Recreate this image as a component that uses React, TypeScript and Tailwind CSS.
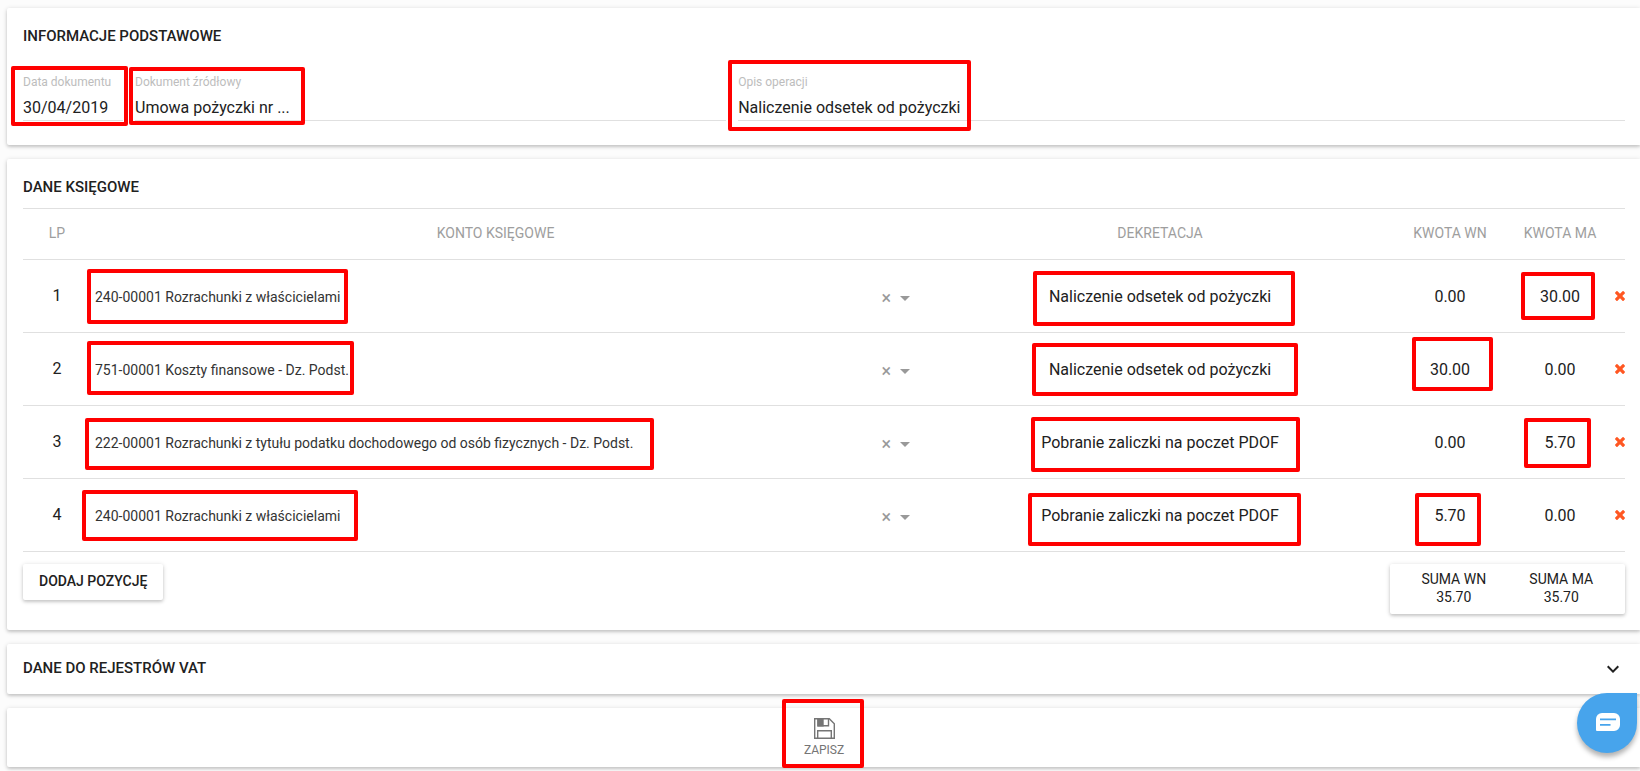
import { useState } from 'react';
import type { ReactNode } from 'react';

const shadow = 'shadow-[0_1px_5px_rgba(0,0,0,0.16),0_2px_3px_rgba(0,0,0,0.12)]';

const accounts = [
  '240-00001 Rozrachunki z właścicielami',
  '751-00001 Koszty finansowe - Dz. Podst.',
  '222-00001 Rozrachunki z tytułu podatku dochodowego od osób fizycznych - Dz. Podst.',
];

const entries = [
  {
    account: accounts[0],
    description: 'Naliczenie odsetek od pożyczki',
    debit: '0.00',
    credit: '30.00',
    accountMark: 'left-6 top-[9px] w-[261px] h-[55px]',
    descriptionMark: 'left-1/2 -ml-[129px] top-[11px] w-[262px] h-[55px]',
    debitMark: '',
    creditMark: 'left-1/2 -ml-[39px] top-3 w-[74px] h-12',
  },
  {
    account: accounts[1],
    description: 'Naliczenie odsetek od pożyczki',
    debit: '30.00',
    credit: '0.00',
    accountMark: 'left-6 top-2 w-[267px] h-[54px]',
    descriptionMark: 'left-1/2 -ml-[130px] top-[10px] w-[266px] h-[53px]',
    debitMark: 'left-1/2 -ml-[38px] top-1 w-[81px] h-[54px]',
    creditMark: '',
  },
  {
    account: accounts[2],
    description: 'Pobranie zaliczki na poczet PDOF',
    debit: '0.00',
    credit: '5.70',
    accountMark: 'left-[22px] top-3 w-[569px] h-[52px]',
    descriptionMark: 'left-1/2 -ml-[131px] top-[11px] w-[269px] h-[55px]',
    debitMark: '',
    creditMark: 'left-1/2 -ml-[36px] top-3 w-[67px] h-[50px]',
  },
  {
    account: accounts[0],
    description: 'Pobranie zaliczki na poczet PDOF',
    debit: '5.70',
    credit: '0.00',
    accountMark: 'left-[19px] top-[11px] w-[276px] h-[51px]',
    descriptionMark: 'left-1/2 -ml-[134px] top-[14px] w-[273px] h-[53px]',
    debitMark: 'left-1/2 -ml-[35px] top-[14px] w-[66px] h-[53px]',
    creditMark: '',
  },
];

// Red highlight frame laid over a field
function Mark({ className }: { className: string }) {
  return (
    <span
      aria-hidden="true"
      className={`absolute z-10 rounded-xs border-4 border-[#ff0000] pointer-events-none ${className}`}
    />
  );
}

function Card({ children, className = '' }: { children: ReactNode; className?: string }) {
  return (
    <section className={`bg-white rounded-l-xs pl-4 pr-[15px] ${shadow} ${className}`}>
      {children}
    </section>
  );
}

function Field({ id, label, value, mark }: { id: string; label: string; value: string; mark: string }) {
  return (
    <div className="relative border-b border-[#e0e0e0]">
      <label htmlFor={id} className="block pt-[2px] text-xs leading-4 text-[#bdbdbd]">
        {label}
      </label>
      <input
        id={id}
        type="text"
        defaultValue={value}
        className="block w-full mt-1 h-[26px] text-base text-[#212121] outline-none"
      />
      <Mark className={mark} />
    </div>
  );
}

export default function App() {
  const [rows] = useState(entries);

  return (
    <main className="min-h-screen bg-[#fcfcfc] pl-[7px] pt-2 pb-1 flex flex-col gap-[14px] overflow-hidden font-['Roboto',sans-serif] text-[#212121]">
      <Card className="pt-[18px] pb-6">
        <h2 className="text-[15px] leading-5 font-medium">INFORMACJE PODSTAWOWE</h2>
        <div className="grid grid-cols-[100px_2fr_3fr] gap-3 mt-[26px]">
          <Field
            id="date"
            label="Data dokumentu"
            value="30/04/2019"
            mark="-left-3 -top-[6px] w-[117px] h-[60px]"
          />
          <Field
            id="source"
            label="Dokument źródłowy"
            value="Umowa pożyczki nr ..."
            mark="-left-[6px] -top-[5px] w-44 h-[58px]"
          />
          <Field
            id="operation"
            label="Opis operacji"
            value="Naliczenie odsetek od pożyczki"
            mark="-left-[10px] -top-3 w-[243px] h-[71px]"
          />
        </div>
      </Card>

      <Card className="pt-[18px] pb-4">
        <h2 className="text-[15px] leading-5 font-medium">DANE KSIĘGOWE</h2>
        <table className="w-full table-fixed mt-[11px] border-t border-[#e0e0e0] border-separate border-spacing-0">
          <thead>
            <tr className="h-[51px] text-sm text-[#9e9e9e] [&>th]:border-b [&>th]:border-[#e0e0e0] [&>th]:font-normal [&>th]:px-0 [&>th]:pt-0 [&>th]:pb-[2px]">
              <th className="w-10">
                <span className="block pl-6 -mr-1">LP</span>
              </th>
              <th className="w-[54%]">KONTO KSIĘGOWE</th>
              <th>
                <span className="block pr-[3px]">DEKRETACJA</span>
              </th>
              <th className="w-[110px]">KWOTA WN</th>
              <th className="w-[110px]">KWOTA MA</th>
              <th className="w-[10px]" aria-label="Usuń" />
            </tr>
          </thead>
          <tbody>
            {rows.map((row, i) => (
              <tr
                key={i}
                className="h-[73px] [&>td]:relative [&>td]:border-b [&>td]:border-[#e0e0e0] [&>td]:p-0"
              >
                <td>
                  <span className="block pl-6 -mr-1 text-center">{i + 1}</span>
                </td>
                <td>
                  <div className="flex items-center pl-8 pr-[18px] pt-[2px] text-[#999]">
                    <select
                      aria-label={`Konto księgowe ${i + 1}`}
                      defaultValue={row.account}
                      className="flex-1 min-w-0 h-9 appearance-none bg-transparent text-sm text-[#333] outline-none"
                    >
                      {accounts.map((account) => (
                        <option key={account}>{account}</option>
                      ))}
                    </select>
                    <button type="button" aria-label="Wyczyść" className="text-lg leading-5 pt-[2px] mr-[9px]">
                      ×
                    </button>
                    <svg width="10" height="5" viewBox="0 0 10 5" fill="currentColor" className="mt-[2px]">
                      <path d="M0 0h10L5 5z" />
                    </svg>
                  </div>
                  <Mark className={row.accountMark} />
                </td>
                <td>
                  <input
                    type="text"
                    aria-label={`Dekretacja ${i + 1}`}
                    defaultValue={row.description}
                    className="block w-full h-9 pr-[3px] text-center outline-none"
                  />
                  <Mark className={row.descriptionMark} />
                </td>
                <td>
                  <input
                    type="text"
                    aria-label={`Kwota WN ${i + 1}`}
                    defaultValue={row.debit}
                    className="block w-full h-9 text-center outline-none"
                  />
                  {row.debitMark && <Mark className={row.debitMark} />}
                </td>
                <td>
                  <input
                    type="text"
                    aria-label={`Kwota MA ${i + 1}`}
                    defaultValue={row.credit}
                    className="block w-full h-9 text-center outline-none"
                  />
                  {row.creditMark && <Mark className={row.creditMark} />}
                </td>
                <td>
                  <button type="button" aria-label="Usuń pozycję" className="block text-[#ff5722]">
                    <svg width="10" height="10" viewBox="110 366 1188 1188" fill="currentColor">
                      <path d="M1298 1322q0 40-28 68l-136 136q-28 28-68 28t-68-28l-294-294-294 294q-28 28-68 28t-68-28l-136-136q-28-28-28-68t28-68l294-294-294-294q-28-28-28-68t28-68l136-136q28-28 68-28t68 28l294 294 294-294q28-28 68-28t68 28l136 136q28 28 28 68t-28 68l-294 294 294 294q28 28 28 68z" />
                    </svg>
                  </button>
                </td>
              </tr>
            ))}
          </tbody>
        </table>

        <div className="flex items-start justify-between mt-3">
          <button
            type="button"
            className={`h-9 px-4 pb-[2px] rounded-xs bg-white text-sm font-medium ${shadow}`}
          >
            DODAJ POZYCJĘ
          </button>
          <dl
            className={`grid grid-cols-2 w-[235px] px-[10px] pt-[6px] pb-2 rounded-xs bg-white text-sm leading-[18px] text-center ${shadow}`}
          >
            <div>
              <dt>SUMA WN</dt>
              <dd>35.70</dd>
            </div>
            <div>
              <dt>SUMA MA</dt>
              <dd>35.70</dd>
            </div>
          </dl>
        </div>
      </Card>

      <Card>
        <button type="button" className="flex items-center justify-between w-full h-[50px]">
          <span className="pb-[2px] text-[15px] leading-5 font-medium">DANE DO REJESTRÓW VAT</span>
          <svg width="24" height="24" viewBox="0 0 24 24" fill="currentColor">
            <path d="M16.59 8.59L12 13.17 7.41 8.59 6 10l6 6 6-6z" />
          </svg>
        </button>
      </Card>

      <Card className="flex justify-center">
        <button
          type="button"
          className="relative flex flex-col items-center w-[82px] h-[59px] pt-[10px] text-xs text-[#757575]"
        >
          <svg width="21" height="21" viewBox="0 0 21 21" fill="none" stroke="currentColor" strokeWidth="1.4">
            <path d="M.7.7h14.6l5 5v14.6H.7z" />
            <path d="M4 .7v7h10.500v-7M3.700 20.3v-7.600h13.600v7.600" />
            <path d="M4 .7h5v7H4z" fill="currentColor" />
          </svg>
          <span className="mt-[3px] leading-4">ZAPISZ</span>
          <Mark className="-left-px -top-[9px] w-[82px] h-[69px]" />
        </button>
      </Card>

      <button
        type="button"
        aria-label="Czat"
        className="fixed right-[3px] bottom-[18px] z-20 flex items-center justify-center size-15 rounded-full rounded-tr-md bg-[#47a4ec] shadow-[0_4px_5px_rgba(0,0,0,0.3)]"
      >
        <svg width="24" height="18" viewBox="0 0 24 18" fill="none" className="mb-[2px] ml-[2px]">
          <path d="M6 0h12a6 6 0 0 1 6 6v6a6 6 0 0 1-6 6H1a1 1 0 0 1-1-1V6a6 6 0 0 1 6-6z" fill="#fff" />
          <path d="M4 6.4h16M4 11.8h10.500" stroke="#47a4ec" strokeWidth="1.8" />
        </svg>
      </button>
    </main>
  );
}
